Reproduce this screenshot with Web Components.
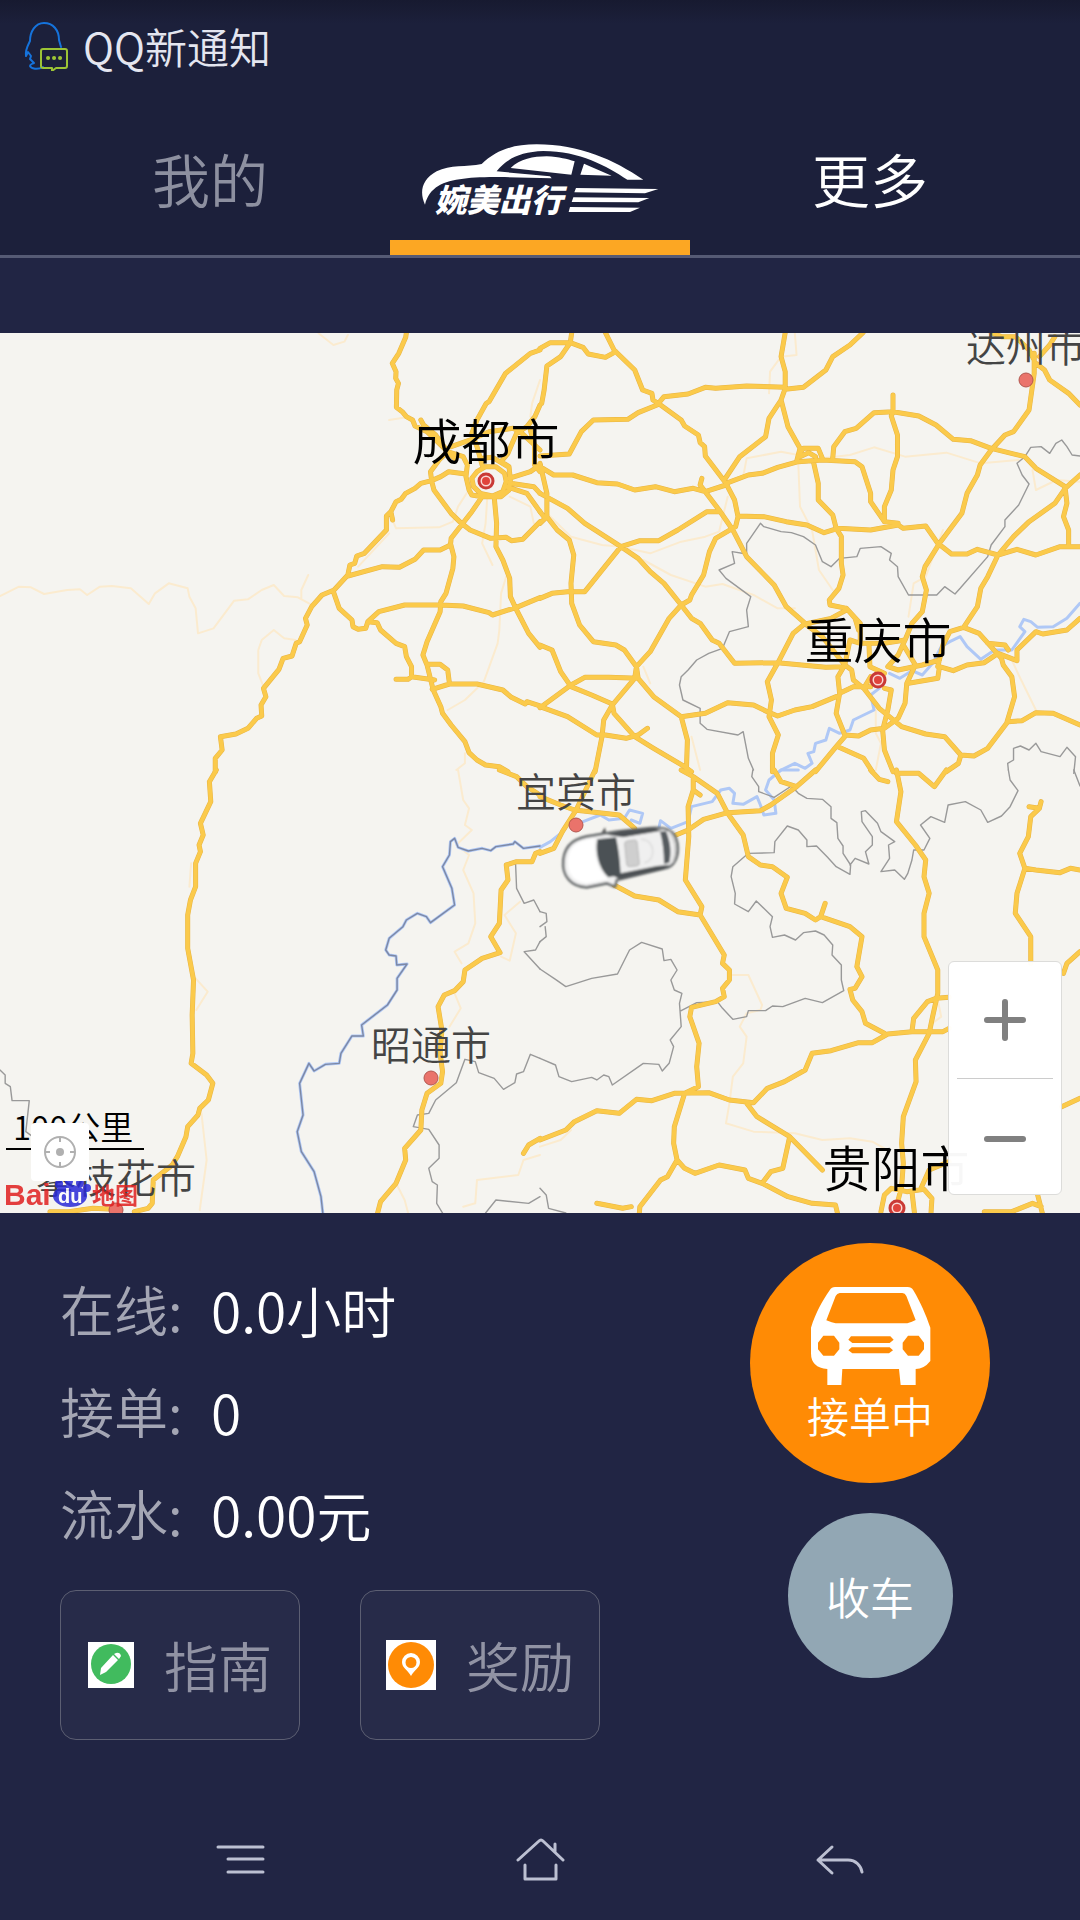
<!DOCTYPE html>
<html lang="zh-CN">
<head>
<meta charset="utf-8">
<meta name="viewport" content="width=device-width, initial-scale=1">
<title>婉美出行</title>
<style>
  html, body { margin: 0; }
  body {
    background: #212544;
    color: #fff;
    font-family: "Noto Sans CJK SC", "Noto Sans", sans-serif;
    font-weight: 350;
  }
</style>
</head>
<body>
<driver-app></driver-app>

<template id="driver-app">
  <style>
    :host { display: flex; flex-direction: column; min-height: 100vh; }
    main { flex: 1; display: flex; flex-direction: column; padding-top: 75px; }
    route-map { flex: 1; min-height: 480px; }
  </style>
  <status-bar>QQ新通知</status-bar>
  <tab-header>
    <a slot="left" href="#mine">我的</a>
    <a slot="right" href="#more">更多</a>
  </tab-header>
  <main>
    <route-map></route-map>
    <driver-panel></driver-panel>
  </main>
  <nav-bar></nav-bar>
</template>

<template id="status-bar">
  <style>
    :host {
      display: flex; align-items: center; gap: 15px; height: 92px; padding: 0 24px 2px;
      background: linear-gradient(#171a30, #1c203b 24px);
      color: #e4e6f0; font-size: 42px; line-height: 60px;
    }
    svg { flex: none; }
  </style>
  <svg width="44" height="50" viewBox="0 0 44 50" fill="none" stroke-linecap="round" stroke-linejoin="round">
    <path d="M19 46c-5 3-12 2-13-1 0-2 2-2 4-3l-4-4 1-3-3-4-2 4c-1-6 2-11 4-15 0-9 5-18 14-18s15 7 15 17l2 7" stroke="#1573dc" stroke-width="2"/>
    <path d="M19 28h22q2 0 2 2v15q0 2-2 2h-9l-4 3v-3h-9q-2 0-2-2V30q0-2 2-2z" stroke="#9cc435" stroke-width="2"/>
    <path d="M24 37h.1M30 37h.1M36 37h.1" stroke="#9cc435" stroke-width="4"/>
  </svg>
  <slot></slot>
</template>

<template id="tab-header">
  <style>
    :host {
      display: grid; grid-template-columns: 6fr 5fr 6fr; padding: 0 30px;
      height: 161px; background: #1c203b; border-bottom: 3px solid #555a74;
    }
    .side, .brand { display: flex; justify-content: center; }
    .side { padding-top: 42px; font-size: 58px; line-height: 84px; }
    .brand { padding-top: 49px; box-sizing: border-box; border-bottom: 15px solid #fca723; height: 161px; }
    ::slotted(a) { color: #fff; text-decoration: none; }
    ::slotted(a[slot="left"]) { color: #8d90a0; }
    svg { overflow: visible; }
    text { font-family: "Noto Sans CJK SC", sans-serif; font-weight: 900; font-style: italic; font-size: 96px; }
  </style>
  <div class="side"><slot name="left"></slot></div>
  <a class="brand" href="#home" aria-label="首页">
    <svg width="240" height="74" viewBox="60 40 720 222" fill="#fff">
      <path d="M75 225C58 188 64 150 110 125C150 105 200 112 245 103C290 60 340 44 410 44C540 44 640 90 730 150L682 150C620 110 540 64 430 64C360 66 316 90 290 125L450 140L455 146C350 142 250 140 190 147C130 154 88 172 75 225Z"/>
      <path d="M332 115C360 88 400 80 440 80C480 82 500 88 524 95L514 135ZM552 102L635 138L541 135Z"/>
      <path d="M528 175L775 178L735 191L523 188ZM520 203L748 205L715 218L515 217ZM510 232L720 234L690 247L506 247Z"/>
      <text x="104" y="247">婉美出行</text>
    </svg>
  </a>
  <div class="side"><slot name="right"></slot></div>
</template>

<template id="route-map">
  <style>
    :host { display: block; position: relative; overflow: hidden; background: #f5f4f0; }
    .canvas { position: absolute; inset: 0; width: 100%; height: 100%; }
    path { vector-effect: non-scaling-stroke; fill: none; stroke-linejoin: round; stroke-linecap: round; }
    .faint { stroke: #fbebcf; stroke-width: 2; }
    .border { stroke: #999; stroke-width: 1.4; }
    .river { stroke: #afc8f6; stroke-width: 3; }
    .riverline { stroke: #7d88a4; stroke-width: 1.4; }
    .casing { stroke: #e8b545; stroke-width: 5; }
    .fill { stroke: #fbca4b; stroke-width: 4; }
    .car path { vector-effect: none; }
    .big, .small { text-anchor: middle; font-family: "Noto Sans CJK SC", sans-serif; font-weight: 350; }
    .big { font-size: 49px; fill: #000; }
    .small { font-size: 40px; fill: #444; }
    .scale { position: absolute; left: 6px; bottom: 63px; width: 138px; box-sizing: border-box; padding: 0 0 2px 7px;
      color: #000; font-size: 33px; line-height: 40px; border: 2px solid #000; border-width: 0 0 2px; white-space: nowrap; }
    .logo { position: absolute; left: 4px; bottom: 1px; }
    .locate { position: absolute; left: 31px; bottom: 32px; }
    .zoom { position: absolute; right: 18px; bottom: 18px; }
  </style>
  <svg class="canvas" viewBox="0 0 1080 880" preserveAspectRatio="xMidYMid slice">
    <defs>
      <g id="roads">
        <path transform="translate(0 -3) scale(.34439 .33333)" d="M1180 8L1178 22 1158 70 1139 100 1150 125 1149 145 1157 160 1152 180 1151 232 1168 245 1180 260 1198 270 1205 288 1240 305 1285 350 1320 385M1222 270L1230 285 1265 315 1300 365 1345 380 1357 405 1353 440 1362 480 1370 495M1568 60L1540 70 1468 130 1420 215 1412 220 1385 270 1370 310 1385 350 1400 405M1310 350L1370 328 1420 305 1490 295 1510 305 1568 360M1568 225L1553 260 1530 290 1500 310 1485 345 1475 370 1455 395M1300 365L1275 390 1250 425 1253 450M1353 432L1303 425 1280 440 1253 452 1222 460 1205 475 1178 490 1165 508 1150 515 1135 545 1122 558 1122 600 1058 670 1036 678 1030 700 1016 705 1010 735M1135 545L1140 570M1010 735L970 780 935 795 905 830 887 865 892 885 870 935 860 940 848 978 822 985 810 1018 765 1075 772 1100 758 1125 760 1158 745 1165 720 1195 685 1212 640 1220 645 1260 625 1285 625 1325M1010 738L1110 710 1160 712 1205 688 1230 660 1278 660 1308 645 1310 625 1340 585 1370 545 1400 500M1253 452L1260 480 1310 550 1340 580 1365 600 1425 625 1470 622 1485 632 1518 628 1568 575M1435 500L1442 580 1440 650 1460 690 1480 745 1482 800 1500 840 1535 910 1568 952M1308 640L1318 680 1315 715 1295 790 1280 815 1278 845 1240 935 1228 975 1240 1005 1258 1080 1280 1130 1285 1150 1310 1185 1350 1235 1362 1268 1385 1290 1410 1305 1450 1310 1475 1325M968 785L985 835 1022 870 1025 890 1040 898 1062 895 1068 875 1100 845 1175 825 1280 825 1345 828 1420 848 1430 855 1500 832 1568 803M1070 875L1095 878 1105 900 1150 940 1175 950 1180 980 1195 1010 1195 1040 1185 1048 1150 1048M1195 1040L1262 1050M1240 1003L1278 1003 1300 1020 1305 1060M1255 1078L1305 1062 1385 1062 1460 1080 1485 1102 1525 1122 1530 1115 1568 1128M1370 445L1385 425 1410 410 1440 410 1465 430 1470 455 1460 485 1430 498 1395 490 1375 470ZM1455 395L1478 410 1482 450 1478 480 1455 500 1400 500 1370 495M1400 385L1430 382 1475 410M1478 445L1540 425 1568 405M1482 460L1550 470 1568 490M1470 470L1530 490 1568 545M1540 300L1552 345 1552 405 1568 425"/>
        <path transform="translate(540 -3) scale(.34439 .33333)" d="M0 55L30 38 88 38 125 52 140 72 190 82 220 65M92 8L88 38 60 80 20 108 12 180 5 220M190 8L215 60 275 120 298 180 325 190 328 210 350 225 410 270 420 288 460 315 465 338 478 350 480 378 540 460 565 510 575 560 568 590 510 625 492 665 475 735 440 795 435 810 410 825M0 378L85 372 120 305 155 270 255 268 285 248 340 225 360 200 430 192 480 172 510 175 600 168 712 172M712 8L700 80 712 125 712 175 700 210 665 265 655 320 580 380 535 450M938 8L900 45 850 80 830 120 765 172 712 178M700 210L720 290 755 355 745 395M750 375L765 355 808 355 820 385M755 380L780 368 800 380M540 460L605 435 645 430 690 412 750 395 820 390 915 395 935 410 960 490 960 515 1000 575M850 385L853 350 885 305 918 295 970 248 1025 245 1100 258 1150 285 1200 328 1250 332 1310 355 1408 380 1440 415 1525 470M1025 195L1025 245 1020 258 1038 315 1038 380 1025 420 1020 480 1000 530 1000 575 1040 580M1435 70L1435 130 1420 240 1375 305 1350 315 1310 360 1278 405 1270 435 1240 490 1225 550 1160 640 1118 710 1110 740 1122 780 1110 845 1080 880 1060 930 1040 975 1010 1010M1310 8L1340 20 1380 20 1420 60 1435 90M1495 20L1480 45 1450 80M1440 100L1465 120 1480 150 1535 190 1568 225M0 410L40 435 95 435 165 458 225 462 275 480 335 470 390 485 445 475 480 485 540 465M470 445L465 465 520 540 560 600 600 680 680 765 715 830 770 880M0 490L80 535 130 580 235 650 285 685 320 725 360 760 410 825 440 865 465 880 500 930 520 940 565 1000 690 998 830 1012 885 1010M520 545L485 545 400 600 345 632 290 632 235 650 130 785 80 785 35 790 0 805M575 558L650 560 715 575 775 585 825 608 865 595 960 600 1040 585 1055 595 1120 588 1155 640 1195 672 1240 672 1270 658 1330 675 1385 658 1440 675 1510 650 1568 650M795 400L808 460 808 510 850 555 860 595 875 620 875 700 880 735 868 775 840 810 842 825 890 835 930 880 930 940M0 400L20 490 20 560 50 600 85 630 98 675 90 760 92 820 115 885 155 935 220 945 245 960 280 1010 285 1045M410 825L375 865 320 965 280 1010 275 1045 210 1125 185 1170 180 1220 160 1325M0 1133L90 1065 130 1042 200 1042 285 1045 330 1100 410 1160 480 1150 545 1118 620 1125 660 1145 690 1158 740 1140 790 1130 860 1100M0 945L35 960 60 1025 90 1070 150 1095 210 1122 215 1150 275 1220 330 1255 420 1310 440 1325M0 1130L80 1160 165 1215 190 1215 250 1225 285 1215 312 1195M410 1160L428 1230 425 1325M770 880L735 910 690 1000 660 1055 672 1110 665 1160 692 1215 675 1270 675 1325M770 882L845 865 890 840M890 835L915 865 925 900M770 882L820 920 850 960 885 1005M885 1005L865 1040 870 1090 860 1150 885 1215 925 1218 960 1200 1000 1195 1040 1165 1060 1120 1065 1060 1090 1005 1055 945M885 1005L905 1020 910 1050 940 1075 985 1135 1050 1190 1120 1212 1175 1220 1222 1275 1260 1278 1300 1255 1355 1180 1378 1100 1370 1040 1345 1005 1340 985 1275 910 1230 892M870 1090L910 1070 960 1070M940 1075L960 1040M955 940L958 1010 1000 1030M930 940L1000 940 1060 930M1010 1010L1040 1020 1110 1005 1160 990M1070 1060L1155 1045 1160 1010 1200 1022 1240 1005 1290 998 1330 970 1385 992 1385 960 1440 905 1460 912 1530 900 1568 865M1000 1075L1020 1080 1010 1140 995 1200 1000 1260 1025 1325M885 1220L860 1250 800 1325M865 1250L940 1285 965 1325M1222 1275L1215 1300 1180 1325M1360 1175L1400 1172 1440 1148 1490 1150 1568 1185M1230 892L1270 830 1280 775 1300 740 1330 675 1375 620 1420 575 1495 520 1525 475 1568 435M1525 475L1530 520 1520 560 1535 600 1535 650M1230 892L1190 905 1170 945 1155 1010M930 940L900 930 885 1005M0 580L15 565 0 545M1300 940L1350 945 1360 960"/>
        <path transform="translate(0 437) scale(.34439 .33333)" d="M628 0L608 35 612 95 582 160 590 195 578 225 582 245 568 280 568 350 553 390 545 435 545 535 562 630 558 735 560 850 555 880 600 915 618 940 605 990 580 1015 575 1035 545 1070 540 1100 515 1160 500 1185 445 1230 442 1300 430 1315 390 1325M330 1318L270 1315 200 1325 145 1325M1568 245L1555 250 1545 275 1500 275 1470 285 1475 330 1455 360 1450 460 1425 500 1452 548 1400 565 1350 600 1345 635 1320 662 1290 675 1272 710 1283 780 1278 850 1285 905 1280 940 1240 970 1225 1020 1222 1080 1175 1135 1178 1170 1150 1240 1105 1295 1095 1335M1450 0L1500 20 1530 50 1568 75M1568 1105L1535 1125 1520 1150"/>
        <path transform="translate(540 437) scale(.34439 .33333)" d="M0 80L60 105 100 120 230 135 275 175M160 0L105 120 65 185 40 235 0 250M410 0L445 20 515 70 545 130 590 195 605 260 640 285 675 290 718 322 700 370 715 415 770 430 800 450 815 440 900 470 935 500 920 590 935 620 915 655 900 658 908 690 935 725 945 760 1000 790M828 400L815 440M445 20L445 60 430 110 432 200 422 330 470 410 465 435 535 555 530 580 550 600 550 630 530 655 535 680 510 695 440 712 435 740 462 820 455 890 460 950 420 970 390 1070 388 1120 398 1170 370 1220 350 1230 290 1310 288 1335M445 60L465 75M800 0L745 50 670 105 640 122 545 128 475 148 430 180 395 195M680 0L700 35 745 50M215 345L275 378 345 390 400 425 465 435M960 0L985 28 1010 35M1035 0L1048 65 1035 155 1090 225 1120 270 1115 320 1130 370 1115 430 1115 500 1155 600 1155 670 1140 740 1130 790 1090 870 1092 935 1055 1040 1050 1120 1055 1180 1050 1250M1035 10L1100 10 1145 50 1180 0M1188 682L1150 685 1125 695 1085 745 1080 785M1188 775L1170 785 1080 785 1010 792 965 818 925 818 845 842 790 850 770 900 710 935 660 955 620 998 550 990 490 968 390 970 325 992 280 988 230 1030 165 1022 100 1055 75 1080 0 1110M600 1000L630 1040 725 1100 820 1200M725 1100L705 1195 670 1205 645 1240 605 1225 595 1200 520 1185 450 1210 420 1195 398 1170M645 1240L720 1280 790 1300 858 1305 865 1335M165 1300L240 1315 265 1310M1455 95L1450 115 1420 110M1450 115L1425 140 1418 200 1393 250 1408 295 1385 370 1380 430 1425 500 1425 580M1408 295L1440 300 1510 308 1540 295 1568 300M1568 545L1530 580 1520 610M1515 1010L1568 985M1445 1275L1460 1335M1455 1310L1430 1300 1370 1325 1290 1325M990 1325L1000 1275 1020 1255 1065 1265 1115 1258 1138 1285 1135 1335M1105 1258L1130 1200 1188 1175M1080 1265L1088 1335M1050 1250L1035 1310"/>
      </g>
      <g id="border-river">
        <path transform="translate(0 437) scale(.34439 .33333)" d="M1568 228L1520 235 1495 215 1490 222 1440 230 1425 242 1400 235 1360 243 1330 232 1320 205 1308 215 1305 255 1285 290 1312 355 1320 405 1270 443 1250 458 1238 440 1212 430 1180 450 1170 470 1130 505 1120 540 1130 555 1150 558 1152 585 1182 582 1153 625 1153 660 1125 705 1050 765 1055 798 1022 798 990 850 985 880 945 883 912 903 897 880 870 940 880 1035 863 1085 875 1145 912 1205 932 1280 938 1335"/>
      </g>
      <filter id="soft" x="-10%" y="-10%" width="120%" height="120%"><feGaussianBlur stdDeviation="3"/></filter>
    </defs>
    <g class="faint">
      <path transform="translate(0 -3) scale(.34439 .33333)" d="M0 798L55 770 90 772 128 792 195 780 232 778 253 795 290 770 325 768 380 775 432 822 450 790 490 760 545 775 550 800 568 835 575 910 620 895 680 812 720 808 760 780 795 765 825 798 865 802 905 825M895 735L875 780 875 805M858 930L825 925 795 900 760 930 750 960 750 1030 765 1070M1140 570L1150 595 1275 592 1315 575 1330 530 1355 490M1130 610L1040 710M925 10L968 45 1000 35 1010 15M1470 740L1455 790 1450 900 1445 940 1405 1055 1350 1110 1300 1140M1415 500L1410 580 1400 640 1430 705M1480 500L1540 530 1550 580M1130 270L1180 262M1568 150L1545 220 1540 260M1350 1270L1350 1300 1325 1320"/>
      <path transform="translate(540 -3) scale(.34439 .33333)" d="M740 10L745 75 700 80 668 125 665 190M590 440L600 385 700 365 750 375M820 385L900 375 970 352 1060 380 1180 368 1280 400 1390 390M750 400L755 530 790 600 810 720 850 780M20 550L90 620 180 645 235 650 320 670 410 635 480 620 520 605 545 500M300 690L380 735 480 770 530 762 620 795 690 835 740 835M1070 860L1085 760 1120 740 1170 600M1370 990L1390 1035 1440 1140M1430 420L1440 480 1500 450 1568 455M975 1320L990 1240 975 1210 975 1130M300 1010L320 1060M440 1220L465 1320"/>
      <path transform="translate(0 437) scale(.34439 .33333)" d="M1330 0L1345 90 1362 115 1350 165 1370 180 1325 225 1362 255 1345 300 1375 370 1380 460 1360 520 1320 545 1340 580M1510 395L1465 435 1498 490 1480 572 1455 560M1320 670L1338 715 1305 770M585 1030L600 1170 580 1320M555 280L550 350M568 625L603 665 570 720M1568 1155L1520 1170 1505 1215 1385 1230 1380 1300 1345 1310M1150 1240L1175 1290 1185 1329"/>
      <path transform="translate(540 437) scale(.34439 .33333)" d="M560 615L605 615 645 705 640 720 600 730 580 770 600 800 590 880 560 920 550 1000 540 1060 620 1085 740 1090 820 1110 900 1105 965 1115 1000 1135M1155 690L1165 740 1140 760M0 1130L60 1110 90 1080"/>
    </g>
    <g class="river">
      <use href="#border-river"/>
      <path transform="translate(540 -3) scale(.34439 .33333)" d="M1568 820L1530 865 1490 890 1445 892 1425 875 1405 868 1393 890 1408 905 1370 960 1320 960 1280 988 1240 950 1220 920 1190 935 1165 950 1140 1000 1110 1035 1080 1022 1045 1045 1015 1030M985 1075L960 1095 970 1140 910 1170 900 1200 870 1210 840 1195 830 1230 800 1240 795 1265 778 1270 790 1300 770 1315 740 1300 700 1320"/>
      <path transform="translate(540 437) scale(.34439 .33333)" d="M0 232L30 215 60 190M125 155L175 135 200 150 245 145 260 120 298 130 290 160 265 150M345 175L350 152 380 175 430 155 440 110 500 95 525 60 550 55 565 70 560 100 590 103 630 80 640 105 650 135 685 130 680 90 655 60 665 30 700 0 750 0"/>
    </g>
    <use class="riverline" href="#border-river"/>
    <g class="border">
      <path transform="translate(540 -3) scale(.34439 .33333)" d="M1568 378L1545 375 1530 350 1515 330 1498 340 1480 370 1455 350 1425 352 1408 380 1385 400 1400 435 1420 462 1390 525 1350 570 1350 590 1310 645 1300 680 1220 775 1205 792 1175 770 1152 795 1070 795 1040 740 1038 710 1015 690 1020 670 990 650 930 655 920 680 870 685 845 710 820 695 800 645 765 620 730 608 700 605 650 590 640 580 600 640 600 672 558 665 565 700 520 720 540 745 612 800 600 840 605 890 550 905 530 955 490 970 455 990 430 1020 410 1040 405 1065 415 1110 465 1135 465 1180 485 1198 575 1215 590 1205 605 1285 620 1320M1360 1320L1358 1300 1375 1290 1375 1255 1395 1248 1420 1260 1440 1240 1455 1265 1510 1280 1530 1252 1555 1280 1550 1330"/>
      <path transform="translate(0 437) scale(.34439 .33333)" d="M1497 280L1500 355 1522 400 1550 390 1568 425M1568 515L1555 540 1522 545 1568 597M0 900L15 915 15 940 30 950 35 992 85 992 75 1085 95 1100M1568 865L1540 853 1520 905 1500 912 1495 938 1462 958 1435 925 1390 908 1380 875 1350 868 1325 938 1265 990 1245 1030 1212 1035 1200 1070 1245 1078 1275 1125 1275 1165 1245 1195 1255 1235 1270 1245 1268 1300 1285 1329M1410 1329L1440 1290 1535 1300 1568 1280"/>
      <path transform="translate(540 437) scale(.34439 .33333)" d="M0 597L45 628 75 650 150 625 225 612 260 540 295 517 355 537 360 572 380 568 398 600 380 630 390 660 412 670 405 700 410 770 378 810 388 830 375 880 355 903 345 883 300 880 210 945 200 920 185 915 165 930 150 922 92 935 55 920 45 885 0 865M410 722L455 698 515 695 530 715 560 748 600 740 605 722 655 722 675 708 705 710 770 685 820 698 882 662 875 630 875 585 848 555 850 525 825 495 800 483 765 488 742 510 710 495 675 502 668 470 675 440 655 420 628 393 605 425 565 402 567 370 555 320 560 290 605 250 680 248 682 215 718 168 750 180 775 210 775 230 803 228 835 262 860 290 900 313 902 285 880 250 880 228 865 205 862 158 845 145 845 110 820 88 775 85 750 70 730 48 680 82 635 65 635 50 615 20 618 0M1360 0L1365 30 1388 62 1365 110 1340 138 1300 157 1280 120 1235 95 1185 105 1175 157 1135 140 1105 165 1132 205 1115 240 1085 240 1080 270 1068 310 1058 328 1030 300 990 305 1015 265 1012 225 1030 215 990 185 980 160 945 122 933 125 935 155 965 200 965 225 945 245 955 282 915 265 900 285M1550 0L1568 48M0 425L18 430 20 455 0 470M15 470L18 500 0 515M0 1255L18 1275 25 1315 75 1329"/>
    </g>
    <use class="casing" href="#roads"/>
    <use class="fill" href="#roads"/>
    <g fill="#ea736b" stroke="#b3574f">
      <circle cx="1026" cy="47" r="7"/><circle cx="576" cy="492" r="7"/>
      <circle cx="431" cy="745" r="7"/><circle cx="116" cy="877" r="7"/>
    </g>
    <g fill="#fbd9d6" stroke="#c93a36" stroke-width="3">
      <circle cx="486" cy="148" r="7"/><circle cx="878" cy="347" r="7"/><circle cx="897" cy="875" r="7"/>
    </g>
    <g fill="#e0443c">
      <circle cx="486" cy="148" r="4"/><circle cx="878" cy="347" r="4"/><circle cx="897" cy="875" r="4"/>
    </g>
    <text class="big" x="486" y="127">成都市</text>
    <text class="big" x="878" y="326">重庆市</text>
    <text class="big" x="896" y="854">贵阳市</text>
    <text class="small" x="1026" y="29">达州市</text>
    <text class="small" x="576" y="474">宜宾市</text>
    <text class="small" x="431" y="727">昭通市</text>
    <text class="small" x="116" y="860">攀枝花市</text>
    <g class="car" transform="translate(540 467) scale(.33333)" filter="url(#soft)">
      <path d="M195 82L200 105 180 105Z" style="fill:#555"/>
      <path d="M70 180C75 130 110 112 160 106L230 95 330 84C375 80 400 90 408 115C420 150 412 190 385 202L230 240 225 260 200 250 140 262C95 260 65 230 70 180Z" style="fill:#f1f1f1;stroke:#6b6e70;stroke-width:8"/>
      <path d="M200 104L245 92 340 84 365 92 250 112Z" style="fill:#4d5154"/>
      <path d="M215 225L350 198 390 194 370 208 240 238Z" style="fill:#4d5154"/>
      <path d="M84 180C88 140 110 120 165 116C160 160 170 210 205 238L140 250C100 245 80 220 84 180Z" style="fill:#fff"/>
      <path d="M172 118L228 112C236 150 240 180 242 225L205 232C175 205 165 155 172 118Z" style="fill:#4b5155"/>
      <path d="M238 115L350 97C362 130 365 165 362 190L246 213Z" style="fill:#f0f0f0"/>
      <path d="M254 130Q254 124 262 123L284 120Q290 120 291 126L298 190Q298 197 290 198L268 200Q261 200 260 193Z" style="fill:#cfcfcf;stroke:#b5b5b5;stroke-width:3"/>
      <path d="M305 118C345 118 350 180 315 188" style="stroke:#dedede;stroke-width:5"/>
      <path d="M360 95L378 93C392 125 395 160 388 188L372 192C372 155 368 125 360 95Z" style="fill:#575b60"/>
      <path d="M388 96C408 120 410 160 398 186" style="stroke:#ccc;stroke-width:6"/>
    </g>
  </svg>
  <div class="scale">100公里</div>
  <svg class="logo" width="138" height="36" viewBox="0 0 138 36" font-weight="700" opacity=".85">
    <text x="0" y="29" font-family="Liberation Sans, sans-serif" font-size="30" fill="#e02020">Bai</text>
    <g fill="#2a2ad8"><ellipse cx="66" cy="20" rx="17" ry="11"/><ellipse cx="55" cy="8" rx="4" ry="5"/><ellipse cx="65" cy="5" rx="4" ry="5"/><ellipse cx="76" cy="7" rx="4" ry="5"/><ellipse cx="83" cy="12" rx="4" ry="4"/></g>
    <text x="54" y="27" font-family="Liberation Sans, sans-serif" font-size="20" fill="#fff">du</text>
    <text x="88" y="28" font-family="Noto Sans CJK SC, sans-serif" font-size="23" fill="#e02020">地图</text>
  </svg>
  <locate-button class="locate"></locate-button>
  <zoom-control class="zoom"></zoom-control>
</template>

<template id="locate-button">
  <style>
    :host { display: block; }
    button { display: flex; align-items: center; justify-content: center; width: 58px; height: 58px; padding: 0;
      border: 0; border-radius: 4px; background: #fff; }
  </style>
  <button type="button" aria-label="定位">
    <svg width="34" height="34" viewBox="0 0 34 34" fill="none" stroke="#b0b0b0" stroke-width="2">
      <circle cx="17" cy="17" r="15"/><circle cx="17" cy="17" r="4" fill="#b0b0b0" stroke="none"/>
      <path d="M17 2v5M17 27v5M2 17h5M27 17h5"/>
    </svg>
  </button>
</template>

<template id="zoom-control">
  <style>
    :host { display: flex; flex-direction: column; width: 114px; box-sizing: border-box; padding: 0 8px;
      background: rgba(255,255,255,.97); border: 1px solid #dcdcda; border-radius: 6px; }
    button { display: flex; align-items: center; justify-content: center; height: 116px; padding: 0; border: 0; background: none; }
    button + button { border-top: 1px solid #ccc; padding-top: 4px; }
    svg { stroke: #808080; stroke-width: 6; stroke-linecap: round; }
  </style>
  <button type="button" aria-label="放大"><svg width="44" height="44" viewBox="0 0 44 44"><path d="M4 22h36M22 4v36"/></svg></button>
  <button type="button" aria-label="缩小"><svg width="44" height="44" viewBox="0 0 44 44"><path d="M4 22h36"/></svg></button>
</template>

<template id="driver-panel">
  <style>
    :host { display: flex; justify-content: space-between; padding: 30px 90px 60px 60px; }
    .left { display: flex; flex-direction: column; padding-top: 15px; }
    .actions { display: flex; gap: 60px; padding-top: 26px; }
    .right { display: flex; flex-direction: column; align-items: center; gap: 30px; }
  </style>
  <div class="left">
    <stat-row label="在线:">0.0小时</stat-row>
    <stat-row label="接单:">0</stat-row>
    <stat-row label="流水:">0.00元</stat-row>
    <div class="actions">
      <action-button>
        <svg slot="icon" width="46" height="46" viewBox="0 0 46 46"><path fill="#fff" d="M0 0h46v46H0z"/><circle cx="23" cy="22" r="20" fill="#41bb5e"/><path d="M12 33l1-7L25 13l5 5-12 12zM26 12l2-1q4-1 5 3l-2 3z" fill="#fff"/></svg>
        指南
      </action-button>
      <action-button>
        <svg slot="icon" width="50" height="50" viewBox="0 0 50 50"><path fill="#fff" d="M0 0h50v50H0z"/><circle cx="25" cy="25" r="23" fill="#ff8b05"/><path fill-rule="evenodd" d="M25 13a9 9 0 0 1 9 9c0 6-6 8-9 14-3-6-9-8-9-14a9 9 0 0 1 9-9zm0 4a5 5 0 1 0 0 11 5 5 0 0 0 0-11z" fill="#fff"/></svg>
        奖励
      </action-button>
    </div>
  </div>
  <div class="right">
    <round-button kind="primary">
      <svg slot="icon" width="122" height="98" viewBox="272 203 362 294" fill="#fff">
        <path fill-rule="evenodd" d="M348 203H566Q577 203 583 213C605 250 620 285 634 325V425Q615 449 590 449V497H545L540 449H370L367 497H325V449Q275 445 276 400V325C290 280 310 245 332 213Q338 203 348 203ZM362 221Q354 222 350 230L322 303Q340 310 350 312H565Q580 308 590 302L562 230Q558 221 550 221ZM313 349L297 370V390L313 409H345L361 390V370L345 349ZM567 349L551 370V390L567 409H599L615 390V370L599 349ZM396 351L388 361 400 371H512L524 361 514 351ZM398 384L388 393 400 402H510L522 393 512 384Z"/>
      </svg>
      接单中
    </round-button>
    <round-button>收车</round-button>
  </div>
</template>

<template id="stat-row">
  <style>
    :host { display: flex; height: 102px; align-items: center; font-size: 55px; line-height: 80px; white-space: nowrap; }
    .label { width: 151px; color: #a4a6b4; font-size: 54px; }
  </style>
  <span class="label"></span><slot></slot>
</template>

<template id="action-button">
  <style>
    :host { display: block; }
    button { display: flex; align-items: center; justify-content: center; gap: 30px; width: 240px; height: 150px; padding: 0;
      border: 1px solid #5c5f72; border-radius: 16px; background: #272b49; color: #9193a4;
      font: inherit; font-size: 54px; line-height: 80px; white-space: nowrap; }
  </style>
  <button type="button"><slot name="icon"></slot><span><slot></slot></span></button>
</template>

<template id="round-button">
  <style>
    :host { display: block; }
    button { display: flex; flex-direction: column; align-items: center; justify-content: center; width: 165px; height: 165px; padding: 0;
      border: 0; border-radius: 50%; background: #92a7b4; color: #fff; font: inherit; font-size: 44px; line-height: 60px; white-space: nowrap; }
    :host([kind="primary"]) button { width: 240px; height: 240px; padding-top: 6px; background: #ff8b05; font-size: 42px; }
  </style>
  <button type="button"><slot name="icon"></slot><span><slot></slot></span></button>
</template>

<template id="nav-bar">
  <style>
    :host { display: grid; grid-template-columns: repeat(3, 1fr); height: 120px; padding: 0 90px; }
    button { display: flex; align-items: center; justify-content: center; padding: 0; border: 0; background: none; }
    svg { fill: none; stroke: #bcc0d2; stroke-width: 3; stroke-linecap: round; stroke-linejoin: round; }
  </style>
  <button type="button" aria-label="菜单"><svg width="50" height="50" viewBox="0 0 50 50"><path d="M3 12h45M13 24h35M13 37h35"/></svg></button>
  <button type="button" aria-label="主页"><svg width="50" height="50" viewBox="0 0 50 50"><path d="M3 25L24 6q2-2 4 0l20 19M40 9v8M10 30v14h31V30"/></svg></button>
  <button type="button" aria-label="返回"><svg width="50" height="50" viewBox="0 0 50 50"><path d="M17 12L3 25l14 13M3 25h30c8 0 13 6 14 12"/></svg></button>
</template>

<script>
  function define(name, setup) {
    customElements.define(name, class extends HTMLElement {
      constructor() {
        super();
        this.attachShadow({ mode: "open" })
          .appendChild(document.getElementById(name).content.cloneNode(true));
      }
      connectedCallback() {
        if (setup) setup(this, this.shadowRoot);
      }
    });
  }
  define("stat-row", (host, root) => {
    root.querySelector(".label").textContent = host.getAttribute("label");
  });
  ["status-bar", "tab-header", "locate-button", "zoom-control", "route-map", "action-button",
   "round-button", "driver-panel", "nav-bar", "driver-app"].forEach(name => define(name));
</script>
</body>
</html>
